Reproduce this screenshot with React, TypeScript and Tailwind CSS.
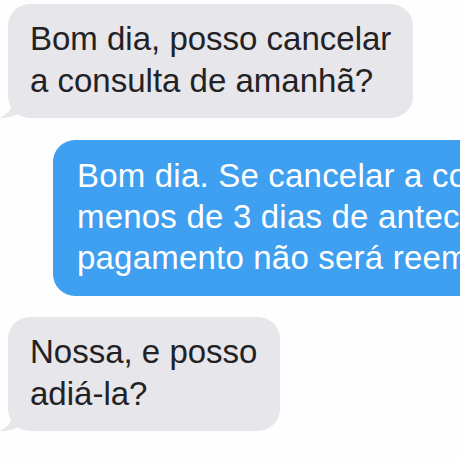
import React from 'react'

const font = { fontFamily: '"Liberation Sans", Arial, sans-serif' }

function Tail({ color }: { color: string }) {
  return (
    <svg
      className="absolute -left-[8px] bottom-0"
      width="24"
      height="22"
      viewBox="0 0 24 22"
    >
      <path d="M14 0 C14 10 10 17 0 22 C9 22 16 20 22 15 L24 0 Z" fill={color} />
    </svg>
  )
}

function Incoming({ lines, width }: { lines: string[]; width: string }) {
  return (
    <div className={`relative ml-[8px] ${width}`}>
      <Tail color="#e6e6eb" />
      <div className="relative rounded-[22px] bg-[#e6e6eb] pl-[22px] pt-[14px] pb-[16px] text-[33px] leading-[42px] text-[#222224]">
        {lines.map((l) => (
          <div key={l} className="whitespace-nowrap">
            {l}
          </div>
        ))}
      </div>
    </div>
  )
}

export default function App() {
  return (
    <div className="w-[460px] h-[460px] overflow-hidden bg-[#fefefe] pt-[4px]" style={font}>
      <Incoming lines={['Bom dia, posso cancelar', 'a consulta de amanhã?']} width="w-[405px]" />

      {/* blue bubble runs past the right edge, as in the screenshot */}
      <div className="mt-[22px] ml-[53px] w-[520px] rounded-[22px] bg-[#3f9ff0] pl-[24px] pt-[15px] pb-[18px] text-[33px] leading-[41px] tracking-[0.2px] text-white">
        <div className="whitespace-nowrap">Bom dia. Se cancelar a consulta com</div>
        <div className="whitespace-nowrap">menos de 3 dias de antecedência, o</div>
        <div className="whitespace-nowrap">pagamento não será reembolsado.</div>
      </div>

      <div className="mt-[21px]">
        <Incoming lines={['Nossa, e posso', 'adiá-la?']} width="w-[272px]" />
      </div>
    </div>
  )
}
